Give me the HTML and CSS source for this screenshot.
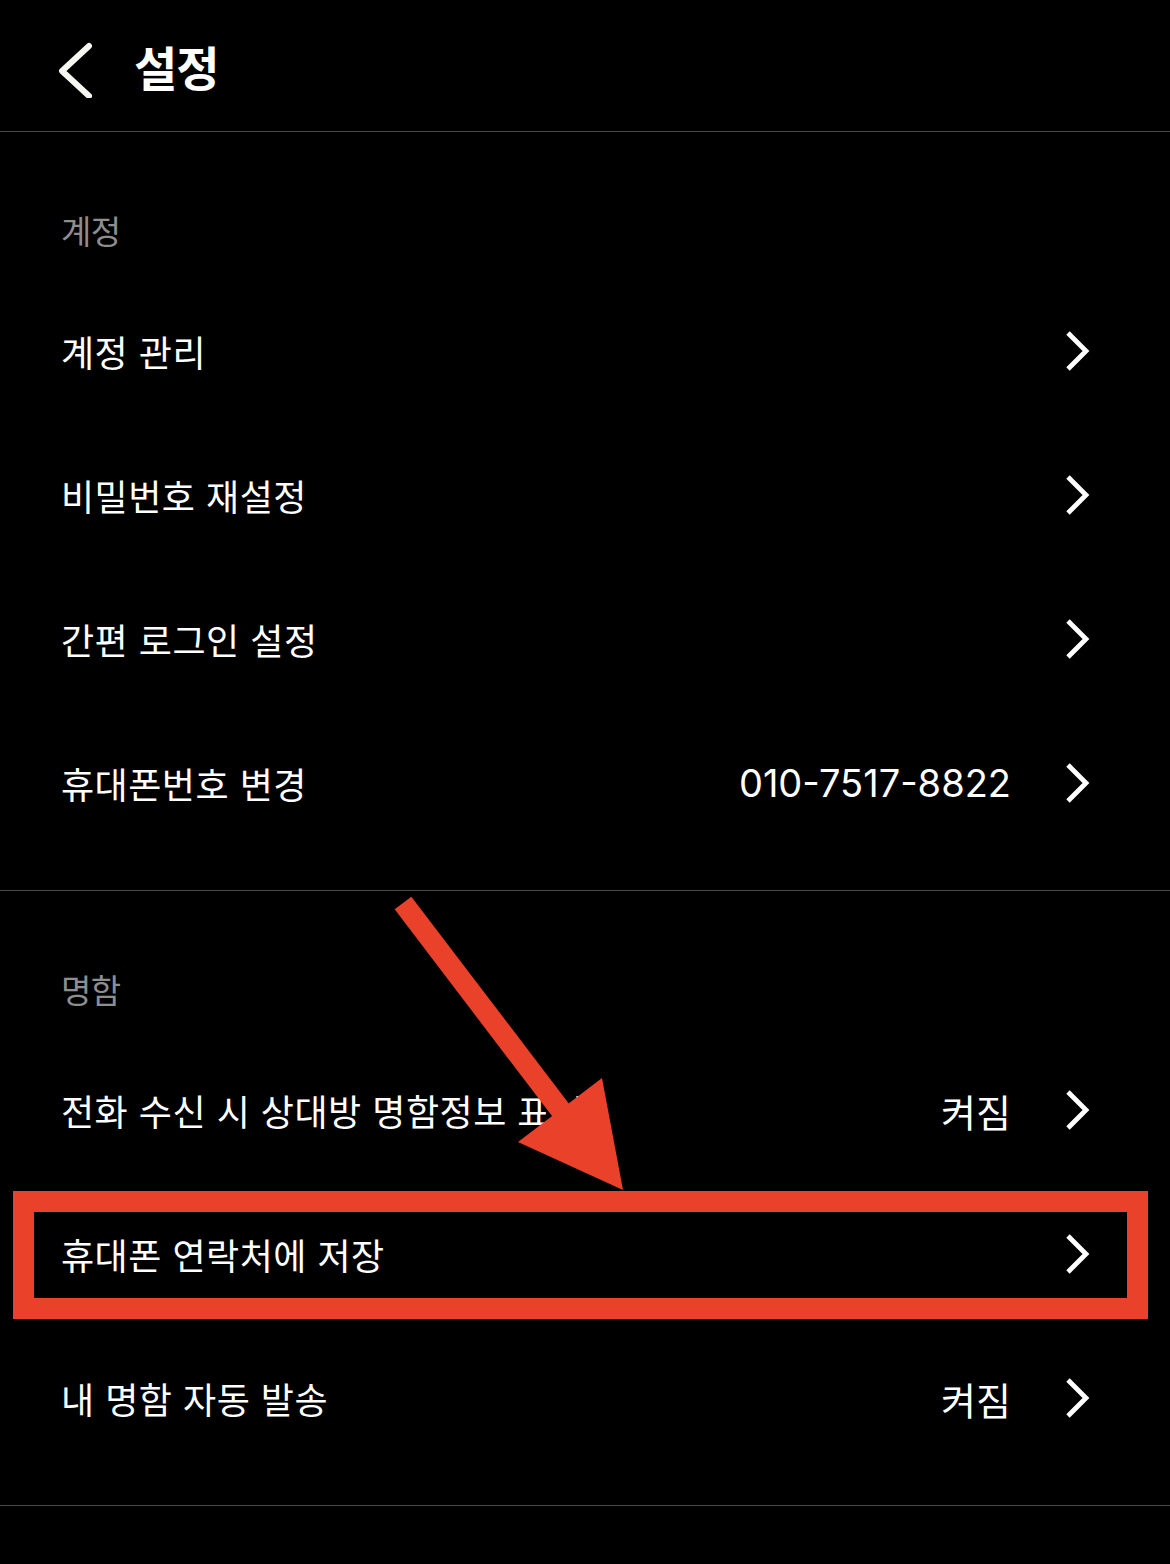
FILE: index.html
```html
<!DOCTYPE html>
<html lang="ko">
<head>
  <meta charset="UTF-8" />
  <title>설정</title>
  <meta name="viewport" content="width=device-width, initial-scale=1.0" />
  <link rel="stylesheet" href="styles.css">
</head>
<body>

<div class="pantalla">
  <header class="barra">
    <span class="volver">
      <svg width="40" height="60" viewBox="0 0 40 60">
        <polyline points="30,8 3,33 30,58" fill="none" stroke="#f7f7f2" stroke-width="6" stroke-linecap="round" stroke-linejoin="round" />
      </svg>
    </span>
    <h1>설정</h1>
  </header>

  <section class="grupo">
    <div class="grupo-titulo">계정</div>
    <div class="fila"><span class="texto">계정 관리</span><span class="flecha"></span></div>
    <div class="fila"><span class="texto">비밀번호 재설정</span><span class="flecha"></span></div>
    <div class="fila"><span class="texto">간편 로그인 설정</span><span class="flecha"></span></div>
    <div class="fila"><span class="texto">휴대폰번호 변경</span><span class="valor">010-7517-8822</span><span class="flecha"></span></div>
  </section>

  <section class="grupo">
    <div class="grupo-titulo">명함</div>
    <div class="fila"><span class="texto">전화 수신 시 상대방 명함정보 표시</span><span class="valor">켜짐</span><span class="flecha"></span></div>
    <div class="fila marcada"><span class="texto">휴대폰 연락처에 저장</span><span class="flecha"></span><span class="recuadro"></span></div>
    <div class="fila"><span class="texto">내 명함 자동 발송</span><span class="valor">켜짐</span><span class="flecha"></span></div>
  </section>

  <!-- flecha roja de la anotación -->
  <svg class="anotacion" width="1170" height="1564" viewBox="0 0 1170 1564">
    <line x1="403" y1="903" x2="572" y2="1125" stroke="#e9412a" stroke-width="21" />
    <polygon points="602,1078 518,1142 623,1190" fill="#e9412a" />
  </svg>
</div>

<script>
  // mismo chevron en todas las filas
  document.querySelectorAll(".flecha").forEach(f => {
    f.innerHTML = '<svg width="26" height="42" viewBox="0 0 26 42"><polyline points="4,3 22,21 4,39" fill="none" stroke="#fff" stroke-width="4.8" /></svg>';
  });
</script>

</body>
</html>
```

FILE: styles.css
```css
body {
  margin: 0;
  background-color: #000;
  font-family: "Noto Sans CJK KR", "Noto Sans", sans-serif;
  color: #fff;
}

.pantalla {
  position: relative;
  width: 1170px;
  min-height: 1564px;
  background-color: #000;
  overflow: hidden;
}

.barra {
  display: flex;
  align-items: center;
  height: 131px;
  padding: 0 0 0 59px;
  border-bottom: 1px solid #4a4a4a;
}

.volver {
  display: flex;
  width: 40px;
  height: 60px;
  margin: 4px 35px 0 0;
}

.barra h1 {
  margin: 0;
  font-size: 47px;
  font-weight: bold;
  letter-spacing: -1px;
  line-height: 1;
}

.grupo {
  padding: 0 0 35px;
  border-bottom: 1px solid #4a4a4a;
}

.grupo-titulo {
  padding: 76px 61px 0;
  height: 71px;
  line-height: 44px;
  font-size: 33px;
  letter-spacing: -0.5px;
  color: #8e8e8e;
}

.fila {
  position: relative;
  display: flex;
  align-items: center;
  height: 144px;
  padding: 0 80px 0 61px;
  font-size: 36px;
  letter-spacing: 0.5px;
}

.texto {
  flex: 1;
}

.valor {
  margin-right: 53px;
  font-family: "Inter", "Noto Sans CJK KR", sans-serif;
  font-size: 38px;
  letter-spacing: 0;
}

.flecha {
  display: flex;
  width: 26px;
  height: 42px;
}

.recuadro {
  position: absolute;
  left: 13px;
  top: 9px;
  width: 1093px;
  height: 86px;
  border: 21px solid #e9412a;
}

.anotacion {
  position: absolute;
  left: 0;
  top: 0;
  pointer-events: none;
}
```
